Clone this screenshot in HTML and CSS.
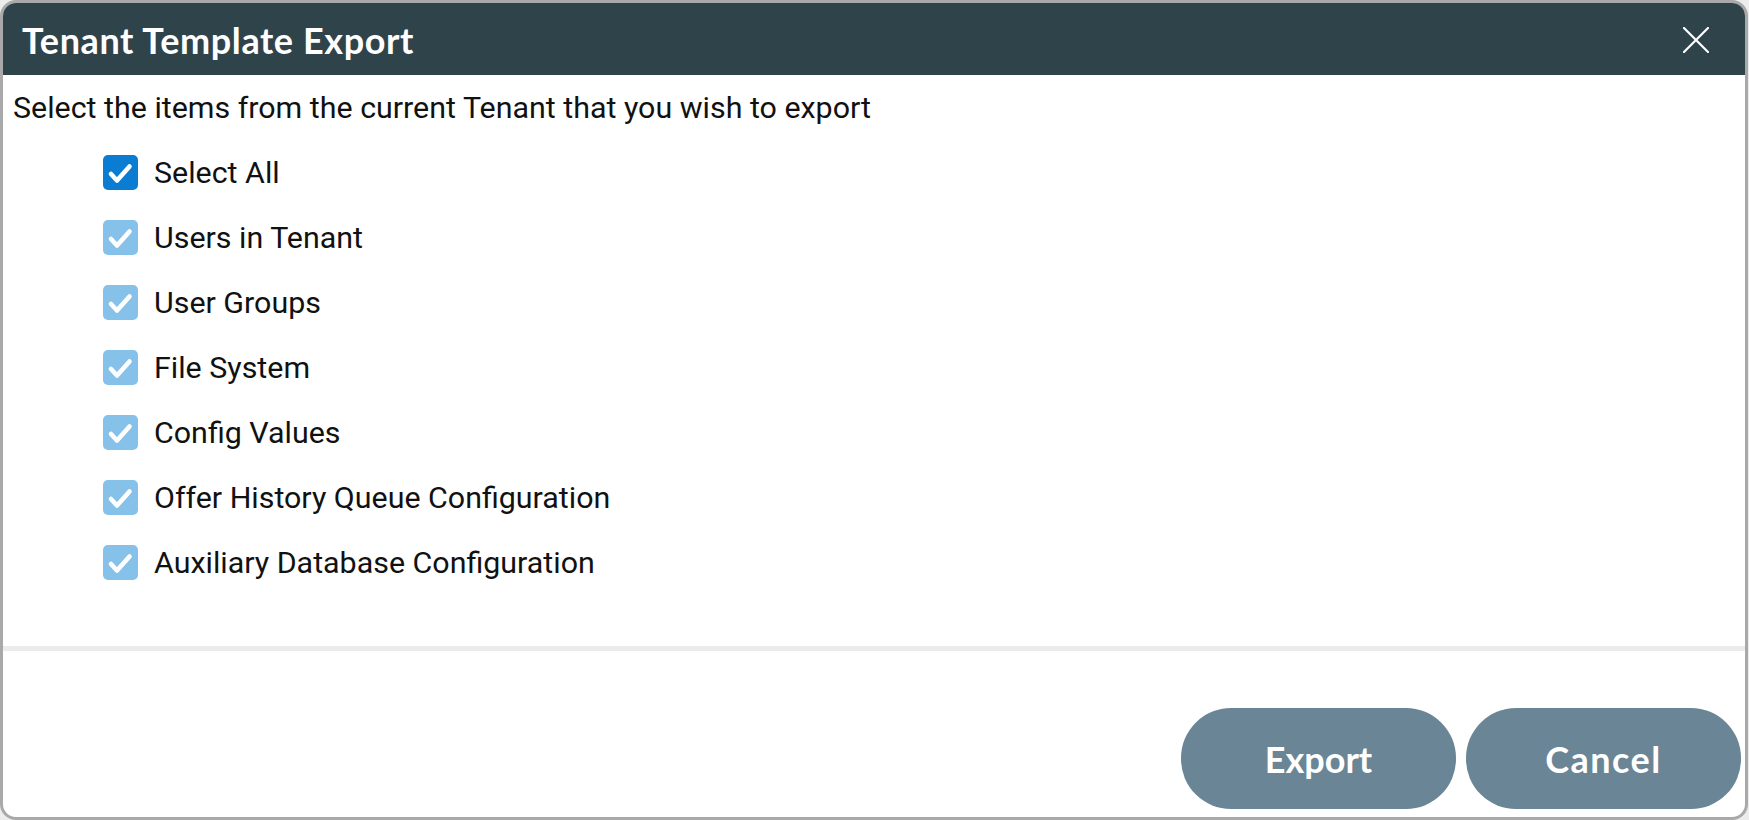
FILE: index.html
```html
<!DOCTYPE html>
<html lang="en">
<head>
<meta charset="utf-8">
<title>Tenant Template Export</title>
<link rel="stylesheet" href="styles.css">
</head>
<body>
<div class="dialog">
  <div class="header">
    <div class="title">Tenant Template Export</div>
    <button class="close" aria-label="Close">
      <svg width="26" height="26" viewBox="0 0 26 26"><path d="M1 1 L25 25 M25 1 L1 25" stroke="#fff" stroke-width="2.2" stroke-linecap="round" fill="none"/></svg>
    </button>
  </div>
  <div class="content">
    <p class="intro">Select the items from the current Tenant that you wish to export</p>
    <ul class="items">
      <li class="item"><span class="box box-all"><svg width="35" height="35" viewBox="0 0 35 35"><path d="M8 19 L14 25.5 L26.5 11.5" stroke="#fff" stroke-width="4.6" stroke-linecap="round" stroke-linejoin="round" fill="none"/></svg></span><span class="label">Select All</span></li>
      <li class="item"><span class="box"><svg width="35" height="35" viewBox="0 0 35 35"><path d="M8 19 L14 25.5 L26.5 11.5" stroke="#fff" stroke-width="4.6" stroke-linecap="round" stroke-linejoin="round" fill="none"/></svg></span><span class="label">Users in Tenant</span></li>
      <li class="item"><span class="box"><svg width="35" height="35" viewBox="0 0 35 35"><path d="M8 19 L14 25.5 L26.5 11.5" stroke="#fff" stroke-width="4.6" stroke-linecap="round" stroke-linejoin="round" fill="none"/></svg></span><span class="label">User Groups</span></li>
      <li class="item"><span class="box"><svg width="35" height="35" viewBox="0 0 35 35"><path d="M8 19 L14 25.5 L26.5 11.5" stroke="#fff" stroke-width="4.6" stroke-linecap="round" stroke-linejoin="round" fill="none"/></svg></span><span class="label">File System</span></li>
      <li class="item"><span class="box"><svg width="35" height="35" viewBox="0 0 35 35"><path d="M8 19 L14 25.5 L26.5 11.5" stroke="#fff" stroke-width="4.6" stroke-linecap="round" stroke-linejoin="round" fill="none"/></svg></span><span class="label">Config Values</span></li>
      <li class="item"><span class="box"><svg width="35" height="35" viewBox="0 0 35 35"><path d="M8 19 L14 25.5 L26.5 11.5" stroke="#fff" stroke-width="4.6" stroke-linecap="round" stroke-linejoin="round" fill="none"/></svg></span><span class="label">Offer History Queue Configuration</span></li>
      <li class="item"><span class="box"><svg width="35" height="35" viewBox="0 0 35 35"><path d="M8 19 L14 25.5 L26.5 11.5" stroke="#fff" stroke-width="4.6" stroke-linecap="round" stroke-linejoin="round" fill="none"/></svg></span><span class="label">Auxiliary Database Configuration</span></li>
    </ul>
  </div>
  <div class="divider"></div>
  <div class="footer">
    <button class="btn">Export</button>
    <button class="btn btn-cancel">Cancel</button>
  </div>
</div>
</body>
</html>
```
FILE: styles.css
```css
html, body {
  margin: 0;
  padding: 0;
  background: #ececec;
}
.dialog {
  width: 1748px;
  height: 820px;
  box-sizing: border-box;
  border: 3px solid #a9a9a9;
  border-radius: 16px;
  overflow: hidden;
  background: #fff;
  display: flex;
  flex-direction: column;
  font-family: Roboto, "Liberation Sans", sans-serif;
}
.header {
  height: 72px;
  flex: none;
  background: #2f434b;
  display: flex;
  align-items: center;
  justify-content: space-between;
  padding: 0 36px 0 19px;
}
.title {
  font-family: Lato, "Open Sans", sans-serif;
  font-weight: 700;
  font-size: 36px;
  color: #fff;
  letter-spacing: 0.6px;
  padding-top: 2px;
}
.close {
  background: none;
  border: 0;
  padding: 0;
  width: 26px;
  height: 26px;
  display: flex;
  margin-top: 1px;
}
.content {
  height: 571px;
  flex: none;
}
.intro {
  margin: 15px 0 0 10px;
  font-size: 30.4px;
  line-height: 36px;
  color: #111;
}
.items {
  list-style: none;
  margin: 14px 0 0 0;
  padding: 0 0 0 100px;
}
.item {
  height: 65px;
  display: flex;
  align-items: center;
  gap: 16px;
}
.box {
  width: 35px;
  height: 35px;
  border-radius: 5px;
  background: #86c1ea;
  display: flex;
}
.box-all {
  background: #0a7dd3;
}
.label {
  font-size: 30.4px;
  color: #111;
}
.divider {
  height: 5px;
  flex: none;
  background: #ebebeb;
}
.footer {
  flex: 1;
  display: flex;
  justify-content: flex-end;
  align-items: flex-end;
  gap: 10px;
  padding: 0 4px 8px 0;
}
.btn {
  width: 275px;
  height: 101px;
  border: 0;
  border-radius: 50px;
  background: #6a8596;
  color: #fff;
  font-family: Lato, "Open Sans", sans-serif;
  font-weight: 700;
  font-size: 36px;
  padding: 0;
}
.btn-cancel {
  letter-spacing: 1.5px;
}
```
